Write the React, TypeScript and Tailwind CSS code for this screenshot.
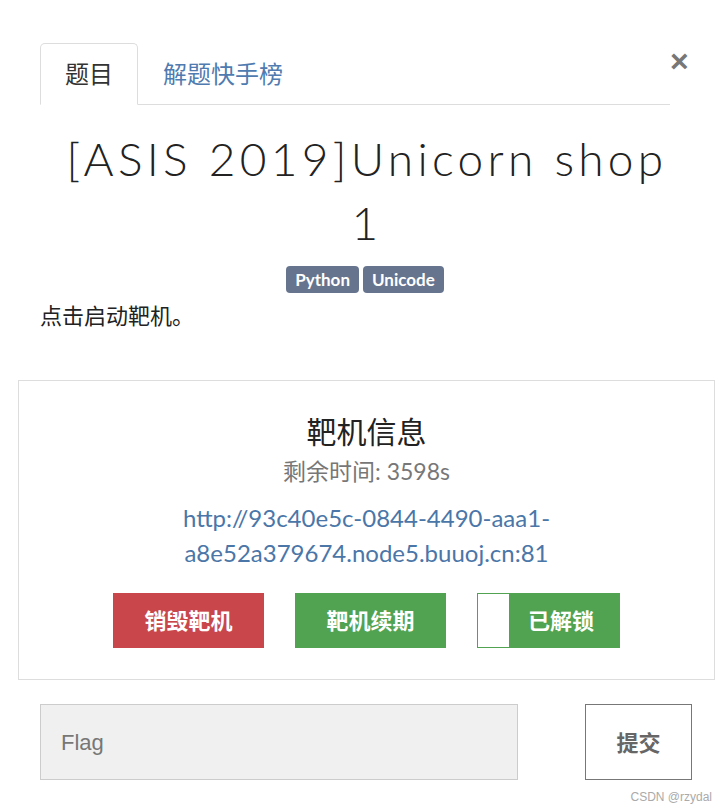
import React from "react";

const cjk = "font-['Lato','Noto_Sans_CJK_SC',sans-serif]";

export default function App() {
  return (
    <div className={`relative w-[724px] h-[810px] overflow-hidden bg-white text-[#222] ${cjk}`}>
      {/* Tabs */}
      <div className="pt-[43px] px-[40px]">
        <div className="flex w-[630px] border-b border-[#ddd]">
          <div className="-mb-px flex h-[62px] w-[98px] items-center justify-center rounded-t-[5px] border border-[#ddd] border-b-white bg-white text-[24px] text-[#333]">
            题目
          </div>
          <div className="flex h-[61px] items-center pl-[25px] text-[24px] text-[#4f7bb0]">
            解题快手榜
          </div>
        </div>
      </div>
      <button className="absolute left-[670px] top-[45px] text-[32px] font-bold leading-none text-[#777] font-['Liberation_Sans',sans-serif]">
        ×
      </button>

      {/* Title */}
      <h1 className="mt-[22px] pl-[10px] text-center text-[46px] font-light leading-[64px] tracking-[4.3px] text-[#222] font-['Lato',sans-serif]">
        [ASIS 2019]Unicorn shop
        <br />1
      </h1>
      <div className="mt-[11px] flex justify-center gap-[4px] pl-[6px]">
        <span className="rounded-[4px] bg-[#67748e] px-[9px] text-[17px] font-bold leading-[27px] text-white">Python</span>
        <span className="rounded-[4px] bg-[#67748e] px-[9px] text-[17px] font-bold leading-[27px] text-white">Unicode</span>
      </div>
      <p className="mt-[8px] pl-[40px] text-[22px] leading-[30px] text-[#222]">点击启动靶机。</p>

      {/* Card */}
      <div className="ml-[18px] mt-[49px] w-[697px] border border-[#ddd] pb-[31px] pt-[29px] text-center">
        <div className="text-[30px] leading-[42px] text-[#222]">靶机信息</div>
        <div className="mt-[4px] text-[23px] leading-[30px] text-[#777]">剩余时间: 3598s</div>
        <div className="mx-auto mt-[14px] w-[420px] text-[24px] leading-[35px] text-[#4a76a8]">
          http://93c40e5c-0844-4490-aaa1-
          <br />
          a8e52a379674.node5.buuoj.cn:81
        </div>
        <div className="mt-[23px] flex justify-center gap-[31px]">
          <button className="h-[55px] w-[151px] bg-[#c9464b] text-[22px] font-bold text-white">销毁靶机</button>
          <button className="h-[55px] w-[151px] bg-[#51a351] text-[22px] font-bold text-white">靶机续期</button>
          <button className="flex h-[55px] w-[143px] border border-[#51a351] bg-[#51a351] text-[22px] font-bold text-white">
            <span className="h-full w-[31px] bg-white" />
            <span className="flex h-full flex-1 items-center justify-center pr-[6px]">已解锁</span>
          </button>
        </div>
      </div>

      {/* Flag form */}
      <div className="mt-[24px] flex pl-[40px]">
        <div className="flex h-[76px] w-[478px] items-center border border-[#ccc] bg-[#f0f0f0] pl-[20px] text-[22px] text-[#777] font-['Liberation_Sans',sans-serif]">
          Flag
        </div>
        <button className="ml-[67px] h-[76px] w-[107px] border border-[#777] bg-white text-[22px] font-bold text-[#666]">
          提交
        </button>
      </div>

      <div className="absolute right-[12px] top-[788px] text-[12px] text-[#aaa] font-['Liberation_Sans',sans-serif]">
        CSDN @rzydal
      </div>
    </div>
  );
}
